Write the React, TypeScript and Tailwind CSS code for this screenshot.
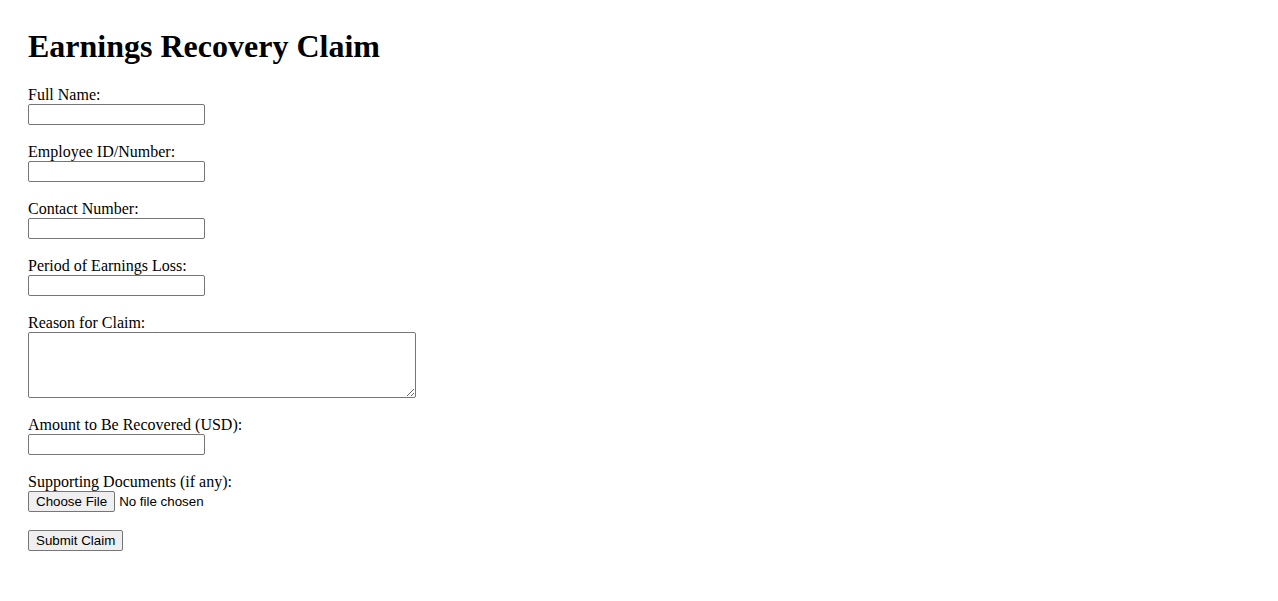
import React from 'react';

const fields = [
  { label: 'Full Name:' },
  { label: 'Employee ID/Number:' },
  { label: 'Contact Number:' },
  { label: 'Period of Earnings Loss:' },
];

const inputClass =
  'block w-[177px] h-[21px] border border-[#767676] rounded-[2px] bg-white px-[2px] text-[13.333px] font-["Liberation_Sans",sans-serif]';

const buttonClass =
  'h-[21px] px-[7px] border border-[#767676] rounded-[2px] bg-[#efefef] text-black text-[13.333px] leading-[17px] font-["Liberation_Sans",sans-serif]';

export default function App() {
  return (
    <div className="min-h-screen bg-white text-black font-['Liberation_Serif',serif] px-[28px] pt-[28px]">
      <h1 className="text-[32px] leading-[37px] font-bold mb-[21px]">Earnings Recovery Claim</h1>

      <form className="flex flex-col" onSubmit={(e) => e.preventDefault()}>
        {fields.map((f) => (
          <div key={f.label} className="flex flex-col mb-[18px]">
            <label className="text-[16px] leading-[18px] h-[18px]">{f.label}</label>
            <input type="text" className={inputClass} />
          </div>
        ))}

        <div className="flex flex-col mb-[18px]">
          <label className="text-[16px] leading-[18px] h-[18px]">Reason for Claim:</label>
          <textarea className="block w-[388px] h-[66px] border border-[#767676] rounded-[2px] bg-white p-[2px] text-[13.333px] font-['Liberation_Mono',monospace]" />
        </div>

        <div className="flex flex-col mb-[18px]">
          <label className="text-[16px] leading-[18px] h-[18px]">Amount to Be Recovered (USD):</label>
          <input type="text" className={inputClass} />
        </div>

        <div className="flex flex-col mb-[16px]">
          <label className="text-[16px] leading-[18px] h-[18px]">Supporting Documents (if any):</label>
          <div className="flex items-center h-[21px]">
            <button type="button" className={buttonClass}>Choose File</button>
            <span className="ml-[4px] text-[13.333px] font-['Liberation_Sans',sans-serif]">No file chosen</span>
          </div>
        </div>

        <div>
          <button type="submit" className={buttonClass}>Submit Claim</button>
        </div>
      </form>
    </div>
  );
}
